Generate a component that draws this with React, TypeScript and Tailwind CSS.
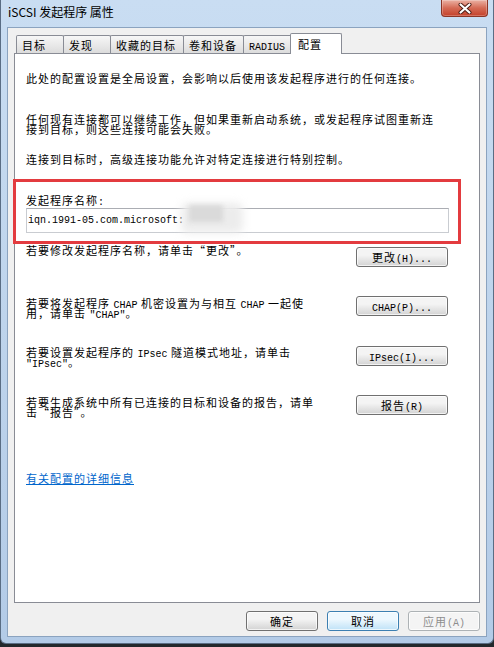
import type { ReactNode } from "react";

// ASCII runs in the dialog are half-width (6px) like SimSun
const M = ({ children }: { children: ReactNode }) => (
  <span className="font-['Liberation_Mono',monospace] text-[10px] tracking-normal">{children}</span>
);

// fixed 10px rows so mixed fonts don't grow the line boxes
const Line = ({ children, className = "" }: { children: ReactNode; className?: string }) => (
  <div className={`h-[10px] whitespace-nowrap leading-[10px] ${className}`}>{children}</div>
);

type TabDef = { label: ReactNode; w: string; active?: boolean };

const tabs: TabDef[] = [
  { label: "目标", w: "w-[48px]" },
  { label: "发现", w: "w-[48px]" },
  { label: "收藏的目标", w: "w-[74px]" },
  { label: "卷和设备", w: "w-[61px]" },
  { label: <M>RADIUS</M>, w: "w-[49px]" },
  { label: "配置", w: "w-[52px]", active: true },
];

function Tab({ label, w, active }: TabDef) {
  if (active) {
    return (
      <div
        className={`relative z-10 -mb-[1px] -ml-[2px] h-[21px] rounded-t-[2px] border border-b-0 border-[#898c95] bg-white pl-[7px] pt-[5px] ${w}`}
      >
        <Line>{label}</Line>
      </div>
    );
  }
  return (
    <div
      className={`-ml-[1px] h-[18px] rounded-t-[2px] border border-b-0 border-[#898c95] bg-linear-to-b from-[#f7f7f7] to-[#dcdcdc] pl-[5px] pt-[4px] first:ml-0 ${w}`}
    >
      <Line>{label}</Line>
    </div>
  );
}

function WinButton({
  children,
  kind = "normal",
  w = "w-[92px]",
}: {
  children: ReactNode;
  kind?: "normal" | "default" | "disabled";
  w?: string;
}) {
  const look =
    kind === "default"
      ? "border-[#3c7fb1] bg-linear-to-b from-[#eef8fe] from-40% to-[#bfe2f7] text-black"
      : kind === "disabled"
        ? "border-[#adb2b5] bg-[#f4f4f4] text-[#8d8d8d]"
        : "border-[#707070] bg-linear-to-b from-[#f4f4f4] from-40% to-[#d3d3d3] text-black";
  return (
    <div
      className={`flex h-[20px] shrink-0 items-center justify-center rounded-[3px] border shadow-[inset_0_0_0_1px_rgba(255,255,255,0.7)] ${look} ${w}`}
    >
      <Line>{children}</Line>
    </div>
  );
}

export default function App() {
  return (
    <div className="h-[647px] w-[494px] overflow-hidden bg-[#23282c] font-['Noto_Sans_CJK_SC',sans-serif] text-[11px] leading-[10px] tracking-[1px] text-black">
      <div className="flex h-[644px] flex-col rounded-b-[6px] border-x border-b border-[#5a6d84] bg-linear-to-b from-[#c9ddf2] via-[#bed4ec] to-[#b3cbe7]">
        {/* Title bar */}
        <div className="flex h-[27px] shrink-0 items-start justify-between pl-[7px] pr-[5px]">
          <span className="pt-[6px] text-[12px] leading-[12px] tracking-normal">iSCSI 发起程序 属性</span>
          <div className="flex h-[17px] w-[47px] items-center justify-center rounded-b-[4px] border border-t-0 border-[#8b3526] bg-linear-to-b from-[#eab1a4] via-[#d46a55] to-[#c4402a] shadow-[inset_0_0_0_1px_rgba(255,255,255,0.25)]">
            <svg width="14" height="11" viewBox="0 0 14 11">
              <path d="M2.5 1.5 L11.5 9.5 M11.5 1.5 L2.5 9.5" stroke="#4a1a12" strokeWidth="4" strokeLinecap="round" />
              <path d="M2.5 1.5 L11.5 9.5 M11.5 1.5 L2.5 9.5" stroke="#ffffff" strokeWidth="2.2" strokeLinecap="round" />
            </svg>
          </div>
        </div>

        {/* Client area */}
        <div className="mx-[6px] mb-[6px] flex h-[610px] flex-col border border-[#8ba3bf] bg-[#f0f0f0] px-[6px] pt-[5px]">
          <div className="flex h-[20px] items-end pl-[2px]">
            {tabs.map((t, i) => (
              <Tab key={i} {...t} />
            ))}
          </div>

          <div className="flex h-[550px] flex-col border border-[#898c95] bg-white pl-[11px] pr-[31px] pt-[19px]">
            <Line>此处的配置设置是全局设置，会影响以后使用该发起程序进行的任何连接。</Line>
            <Line className="mt-[31px]">任何现有连接都可以继续工作，但如果重新启动系统，或发起程序试图重新连</Line>
            <Line>接到目标，则这些连接可能会失败。</Line>
            <Line className="mt-[20px]">连接到目标时，高级连接功能允许对特定连接进行特别控制。</Line>

            {/* initiator name, outlined in red */}
            <div className="relative mt-[31px] w-[423px]">
              <Line>
                发起程序名称<M>:</M>
              </Line>
              <div className="relative mt-[3px] h-[25px] border border-[#c9ccd1] border-t-[#abadb3] bg-white pl-[1px] pt-[4px]">
                <Line>
                  <M>iqn.1991-05.com.microsoft:</M>
                </Line>
                <div className="absolute left-[154px] top-[-6px] h-[30px] w-[62px] rounded-[6px] bg-[#ececec] blur-[4px]" />
                <div className="absolute left-[162px] top-[-4px] h-[17px] w-[34px] bg-[#dadada] blur-[2px]" />
              </div>
              <div className="pointer-events-none absolute -bottom-[11px] -left-[13px] -right-[12px] -top-[16px] border-[3px] border-[#e33b3f]" />
            </div>

            <div className="mt-[12px] flex items-start">
              <Line>若要修改发起程序名称，请单击“更改”。</Line>
              <div className="ml-auto mt-[2px]">
                <WinButton>
                  更改<M>(H)...</M>
                </WinButton>
              </div>
            </div>

            <div className="mt-[29px] flex items-start">
              <div className="mt-[2px]">
                <Line>
                  若要将发起程序 <M>CHAP</M> 机密设置为与相互 <M>CHAP</M> 一起使
                </Line>
                <Line>
                  用，请单击 <M>"CHAP"</M>。
                </Line>
              </div>
              <div className="ml-auto">
                <WinButton>
                  <M>CHAP(P)...</M>
                </WinButton>
              </div>
            </div>

            <div className="mt-[28px] flex items-start">
              <div className="mt-[1px]">
                <Line>
                  若要设置发起程序的 <M>IPsec</M> 隧道模式地址，请单击
                </Line>
                <Line>
                  <M>"IPsec"</M>。
                </Line>
              </div>
              <div className="ml-auto">
                <WinButton>
                  <M>IPsec(I)...</M>
                </WinButton>
              </div>
            </div>

            <div className="mt-[28px] flex items-start">
              <div className="mt-[2px]">
                <Line>若要生成系统中所有已连接的目标和设备的报告，请单</Line>
                <Line>击“报告”。</Line>
              </div>
              <div className="ml-auto">
                <WinButton>
                  报告<M>(R)</M>
                </WinButton>
              </div>
            </div>

            <a className="mt-[55px] w-fit whitespace-nowrap leading-[12px] text-[#0066cc] underline underline-offset-[1px]">
              有关配置的详细信息
            </a>
          </div>

          <div className="mt-[8px] flex justify-end gap-[9px]">
            <WinButton w="w-[72px]">确定</WinButton>
            <WinButton w="w-[72px]" kind="default">
              取消
            </WinButton>
            <WinButton w="w-[72px]" kind="disabled">
              应用<M>(A)</M>
            </WinButton>
          </div>
        </div>
      </div>
    </div>
  );
}
